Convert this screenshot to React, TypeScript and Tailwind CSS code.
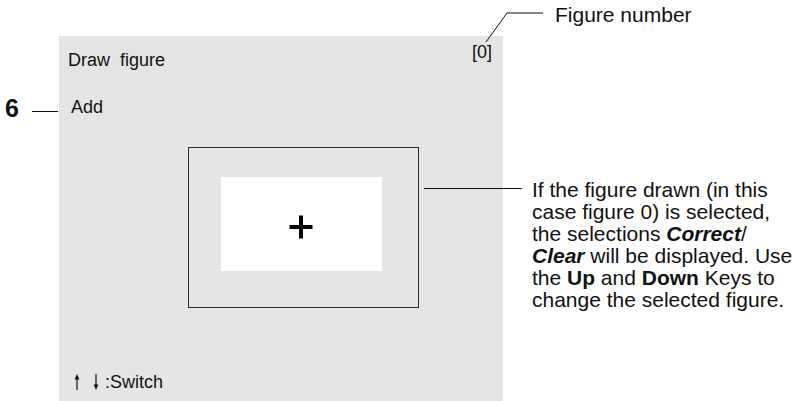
const font = "font-['Liberation_Sans',Arial,sans-serif]";

function UpArrow({ down = false }: { down?: boolean }) {
  return (
    <svg width="8" height="16" viewBox="0 0 8 16" className={down ? "rotate-180" : ""}>
      <line x1="4" y1="3" x2="4" y2="16" stroke="#111" strokeWidth="1.2" />
      <polygon points="1.6,5.5 4,0 6.4,5.5" fill="#111" />
    </svg>
  );
}

function Plus() {
  return (
    <svg width="24" height="24" viewBox="0 0 24 24">
      <rect x="0.5" y="10" width="23" height="4" fill="#000" />
      <rect x="10" y="0.5" width="4" height="23" fill="#000" />
    </svg>
  );
}

export default function App() {
  return (
    <div className={`relative flex h-[401px] w-[800px] overflow-hidden bg-white text-[#111] ${font}`}>
      {/* step label */}
      <div className="w-[59px] shrink-0 pt-[94px]">
        <div className="flex items-start">
          <span className="ml-[5px] text-[25px] font-bold leading-[28px]">6</span>
          <div className="ml-[13px] mt-[17px] h-px w-[26px] bg-[#111]" />
        </div>
      </div>

      {/* screen */}
      <div className="mt-[36px] flex w-[444px] shrink-0 flex-col bg-[#e5e5e5] text-[18px] leading-[20px]">
        <div className="flex justify-between pl-[9px] pr-[11px]">
          <span className="mt-[14px] whitespace-pre">Draw  figure</span>
          <span className="mt-[6px]">[0]</span>
        </div>
        <div className="mt-[27px] pl-[12px]">Add</div>
        <div className="ml-[129px] mt-[30px] h-[161px] w-[231px] border-[1.5px] border-[#2a2a2a] pl-[31.5px] pt-[28.5px]">
          <div className="flex h-[94px] w-[161px] items-center justify-center bg-white pt-[7px]">
            <Plus />
          </div>
        </div>
        <div className="mt-[64px] flex items-start pl-[14px]">
          <div className="mt-[2px]">
            <UpArrow />
          </div>
          <div className="ml-[11px] mt-[2px]">
            <UpArrow down />
          </div>
          <span className="ml-[5px]">:Switch</span>
        </div>
      </div>

      {/* annotations */}
      <div className="flex flex-1 flex-col text-[21px] leading-[22px]">
        <div className="mt-[4px] pl-[52px] whitespace-nowrap">Figure number</div>
        <p className="mt-[153px] pl-[29px] whitespace-nowrap">
          If the figure drawn (in this
          <br />
          case figure 0) is selected,
          <br />
          the selections <b className="italic">Correct</b>/
          <br />
          <b className="italic">Clear</b> will be displayed. Use
          <br />
          the <b>Up</b> and <b>Down</b> Keys to
          <br />
          change the selected figure.
        </p>
      </div>

      {/* leader lines */}
      <svg className="pointer-events-none absolute left-0 top-0" width="800" height="401">
        <polyline points="486,42 507,13 543,13" fill="none" stroke="#111" strokeWidth="1" />
        <line x1="424" y1="188.5" x2="522" y2="188.5" stroke="#111" strokeWidth="1" />
      </svg>
    </div>
  );
}
